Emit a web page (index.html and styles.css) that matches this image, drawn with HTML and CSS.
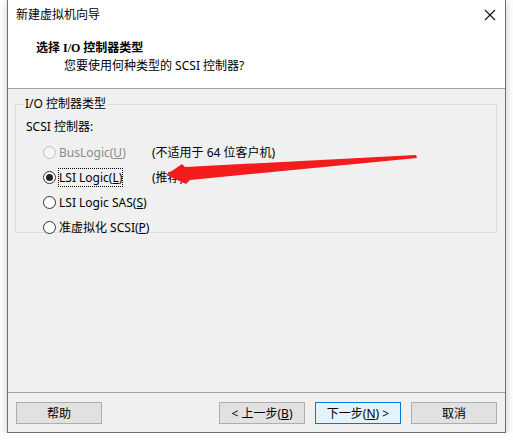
FILE: index.html
```
<!DOCTYPE html>
<html lang="zh-CN">
<head>
  <meta charset="UTF-8" />
  <title>新建虚拟机向导</title>
  <link rel="stylesheet" href="styles.css">
</head>
<body>
  <div class="window">
    <div class="titlebar">
      <span class="title">新建虚拟机向导</span>
      <svg class="close" width="12" height="12" viewBox="0 0 12 12">
        <path d="M1 1 L11 11 M11 1 L1 11" stroke="#111" stroke-width="1.1" fill="none"/>
      </svg>
    </div>

    <div class="header">
      <div class="header-title">选择 I/O 控制器类型</div>
      <div class="header-sub">您要使用何种类型的 SCSI 控制器?</div>
    </div>

    <div class="body">
      <fieldset class="group">
        <legend>I/O 控制器类型</legend>
        <div class="label">SCSI 控制器:</div>

        <div class="option disabled">
          <span class="radio"></span>
          <span class="opt-text">BusLogic(<u>U</u>)</span>
          <span class="note">(不适用于 64 位客户机)</span>
        </div>
        <div class="option">
          <span class="radio checked"></span>
          <span class="opt-text"><span class="focus">LSI Logic(<u>L</u>)</span></span>
          <span class="note">(推荐)</span>
        </div>
        <div class="option">
          <span class="radio"></span>
          <span class="opt-text">LSI Logic SAS(<u>S</u>)</span>
        </div>
        <div class="option">
          <span class="radio"></span>
          <span class="opt-text">准虚拟化 SCSI(<u>P</u>)</span>
        </div>
      </fieldset>

      <!-- annotation drawn over the dialog -->
      <svg class="arrow" width="513" height="440" viewBox="0 0 513 440">
        <polygon points="165,175 181,164 184,167 415,155 416,158 189,180 185,184" fill="#f31b1b"/>
      </svg>
    </div>

    <div class="footer">
      <button class="btn">帮助</button>
      <div class="spacer"></div>
      <button class="btn">&lt; 上一步(<u>B</u>)</button>
      <button class="btn primary">下一步(<u>N</u>) &gt;</button>
      <button class="btn">取消</button>
    </div>
  </div>
</body>
</html>
```

FILE: styles.css
```
body {
  margin: 0;
  background: #fff;
  font-family: "Noto Sans", "Noto Sans CJK SC", sans-serif;
  font-size: 12px;
  color: #000;
}

.window {
  position: relative;
  margin-left: 7px;
  width: 499px;
  height: 433px;
  box-sizing: border-box;
  border: 1px solid #6f6f6f;
  border-top: none;
  background: #f0f0f0;
  box-shadow: 0 2px 9px rgba(0,0,0,0.22);
  display: flex;
  flex-direction: column;
}

.titlebar {
  height: 30px;
  background: #fff;
  display: flex;
  align-items: center;
  padding: 0 9px 0 8px;
}

.title {
  flex: 1;
  line-height: 16px;
}

.header {
  height: 58px;
  background: #fff;
  border-bottom: 1px solid #a0a0a0;
}

.header-title {
  padding-left: 28px;
  padding-top: 10px;
  font-family: "Liberation Serif", "Noto Sans CJK SC", serif;
  font-weight: bold;
  font-size: 12px;
  line-height: 16px;
}

.header-sub {
  padding-left: 56px;
  padding-top: 2px;
  line-height: 16px;
}

.body {
  flex: 1;
  padding: 7px 8px 0 7px;
}

.group {
  margin: 0;
  padding: 4px 10px 4px 10px;
  border: 1px solid #dcdcdc;
  height: 137px;
  box-sizing: border-box;
}

.group legend {
  padding: 0 1px;
  margin-left: -2px;
  line-height: 16px;
}

.label {
  line-height: 16px;
  margin-top: 3px;
  margin-bottom: 5px;
}

.option {
  display: flex;
  align-items: center;
  height: 25px;
  padding-left: 17px;
  white-space: nowrap;
}

.radio {
  flex: none;
  width: 13px;
  height: 13px;
  box-sizing: border-box;
  border: 1px solid #333;
  border-radius: 50%;
  background: #fff;
  display: flex;
  align-items: center;
  justify-content: center;
  margin-right: 3px;
}

.radio.checked::after {
  content: "";
  width: 7px;
  height: 7px;
  border-radius: 50%;
  background: #222;
}

.opt-text {
  flex: none;
  width: 93px;
  line-height: 16px;
}

.focus {
  outline: 1px dotted #000;
}

.note {
  line-height: 16px;
}

.disabled .radio {
  border-color: #c0c0c0;
  background: #f4f4f4;
}

.disabled .opt-text {
  color: #8a8a8a;
}

.arrow {
  position: absolute;
  left: -7px;
  top: 0;
  pointer-events: none;
}

.footer {
  height: 40px;
  box-sizing: border-box;
  border-top: 1px solid #a0a0a0;
  padding: 9px 8px 0 8px;
  display: flex;
  gap: 10px;
}

.spacer {
  flex: 1;
}

.btn {
  width: 86px;
  height: 22px;
  box-sizing: border-box;
  border: 1px solid #adadad;
  background: #e1e1e1;
  font-family: inherit;
  font-size: 12px;
  padding: 0;
  color: #000;
}

.btn.primary {
  border-color: #0078d7;
  background: #e5f1fb;
}
```
